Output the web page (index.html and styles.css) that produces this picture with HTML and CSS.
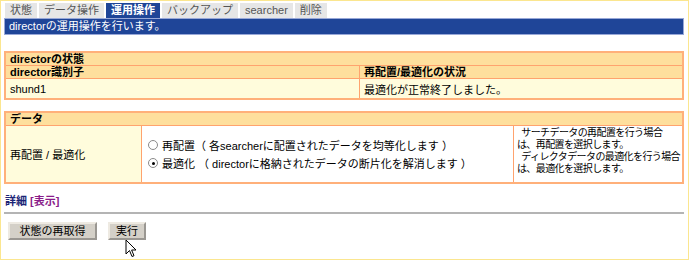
FILE: index.html
```html
<!DOCTYPE html>
<html lang="ja">
<head>
  <meta charset="UTF-8">
  <title>director 運用操作</title>
  <link rel="stylesheet" href="styles.css">
</head>
<body>
  <div class="frame">
    <div class="tabs">
      <span class="tab">状態</span>
      <span class="tab">データ操作</span>
      <span class="tab active">運用操作</span>
      <span class="tab">バックアップ</span>
      <span class="tab">searcher</span>
      <span class="tab">削除</span>
    </div>
    <div class="titlebar">directorの運用操作を行います。</div>

    <table class="grid status">
      <tr><th colspan="2" class="caption">directorの状態</th></tr>
      <tr>
        <th class="col-id">director識別子</th>
        <th>再配置/最適化の状況</th>
      </tr>
      <tr>
        <td class="val">shund1</td>
        <td class="val">最適化が正常終了しました。</td>
      </tr>
    </table>

    <table class="grid data">
      <tr><th colspan="3" class="caption">データ</th></tr>
      <tr>
        <td class="label">再配置 / 最適化</td>
        <td class="options">
          <label class="opt"><span class="radio"></span>再配置（ 各searcherに配置されたデータを均等化します ）</label>
          <label class="opt"><span class="radio on"></span>最適化 （ directorに格納されたデータの断片化を解消します ）</label>
        </td>
        <td class="note">&nbsp;&nbsp;サーチデータの再配置を行う場合<br>は、再配置を選択します。<br>&nbsp;&nbsp;ディレクタデータの最適化を行う場合<br>は、最適化を選択します。</td>
      </tr>
    </table>

    <div class="detail"><span class="detail-title">詳細</span> <span class="detail-link">[表示]</span></div>
    <div class="rule"></div>

    <div class="buttons">
      <button class="btn wide">状態の再取得</button>
      <button class="btn">実行</button>
    </div>

    <svg class="cursor" width="13" height="20" viewBox="0 0 13 20">
      <path d="M1 1 L1 15 L4.5 11.5 L7 17.5 L9 16.7 L6.6 11 L11 11 Z" fill="#fff" stroke="#000" stroke-width="1"/>
    </svg>
  </div>
</body>
</html>
```

FILE: styles.css
```css
body {
  margin: 0;
  font-family: "Liberation Sans", "Noto Sans CJK JP", sans-serif;
  font-size: 10px;
  color: #000;
  background: #fff;
}
.frame {
  position: relative;
  box-sizing: border-box;
  width: 689px;
  height: 260px;
  border: 1px solid #fbe68f;
  padding: 2px 4px 0 3px;
}
.tabs {
  display: flex;
  gap: 2px;
  height: 15px;
  padding-left: 1px;
}
.tab {
  background: #e6e6e6;
  color: #555;
  padding: 0 5px;
  line-height: 15px;
  font-size: 11px;
}
.tab.active {
  background: #1e4597;
  color: #fff;
  font-weight: bold;
}
.titlebar {
  background: #1f4598;
  border: 1px solid #98a8d8;
  color: #fff;
  height: 15px;
  line-height: 15px;
  padding-left: 4px;
  font-size: 11px;
}
.grid {
  width: 100%;
  border-collapse: collapse;
  border: 2px solid #ffb07a;
}
.grid th, .grid td {
  border: 1px solid #ffa36e;
  text-align: left;
  padding: 0 4px;
}
.grid th {
  background: #fedf9d;
  font-weight: bold;
  font-size: 11px;
  height: 12px;
  line-height: 12px;
}
.status {
  margin-top: 16px;
}
.status .col-id {
  width: 345px;
}
.status .val {
  background: #fffcdc;
  height: 19px;
  font-size: 11px;
}
.data {
  margin-top: 11px;
}
.data .label {
  background: #fffcdc;
  width: 127px;
  height: 56px;
  font-size: 11px;
}
.data .options {
  font-size: 11px;
  padding: 0 6px;
}
.opt {
  display: flex;
  align-items: center;
  gap: 4px;
  height: 18px;
  white-space: nowrap;
}
.radio {
  width: 10px;
  height: 10px;
  border-radius: 50%;
  border: 1px solid #8a8a8a;
  background: #fff;
  box-sizing: border-box;
  position: relative;
}
.radio.on::after {
  content: "";
  position: absolute;
  left: 2.5px;
  top: 2.5px;
  width: 3px;
  height: 3px;
  border-radius: 50%;
  background: #000;
}
.data .note {
  width: 161px;
  font-size: 10px;
  letter-spacing: -0.6px;
  line-height: 12px;
  white-space: nowrap;
  vertical-align: top;
  padding: 1px 2px 0 3px;
}
.detail {
  margin-top: 10px;
  font-weight: bold;
  font-size: 11px;
  line-height: 14px;
  padding-left: 1px;
}
.detail-title {
  color: #1a2375;
}
.detail-link {
  color: #8a1c8a;
}
.rule {
  height: 2px;
  background: #b4b4b4;
  margin-top: 4px;
}
.buttons {
  display: flex;
  gap: 11px;
  margin-top: 8px;
  padding-left: 4px;
}
.btn {
  font-family: "Liberation Sans", "Noto Sans CJK JP", sans-serif;
  font-size: 11px;
  background: #d4d0c8;
  border: 2px outset #eeeae2;
  padding: 0 6px;
  height: 18px;
  line-height: 14px;
  color: #000;
}
.btn.wide {
  width: 89px;
}
.cursor {
  position: absolute;
  left: 124px;
  top: 238px;
}
```
